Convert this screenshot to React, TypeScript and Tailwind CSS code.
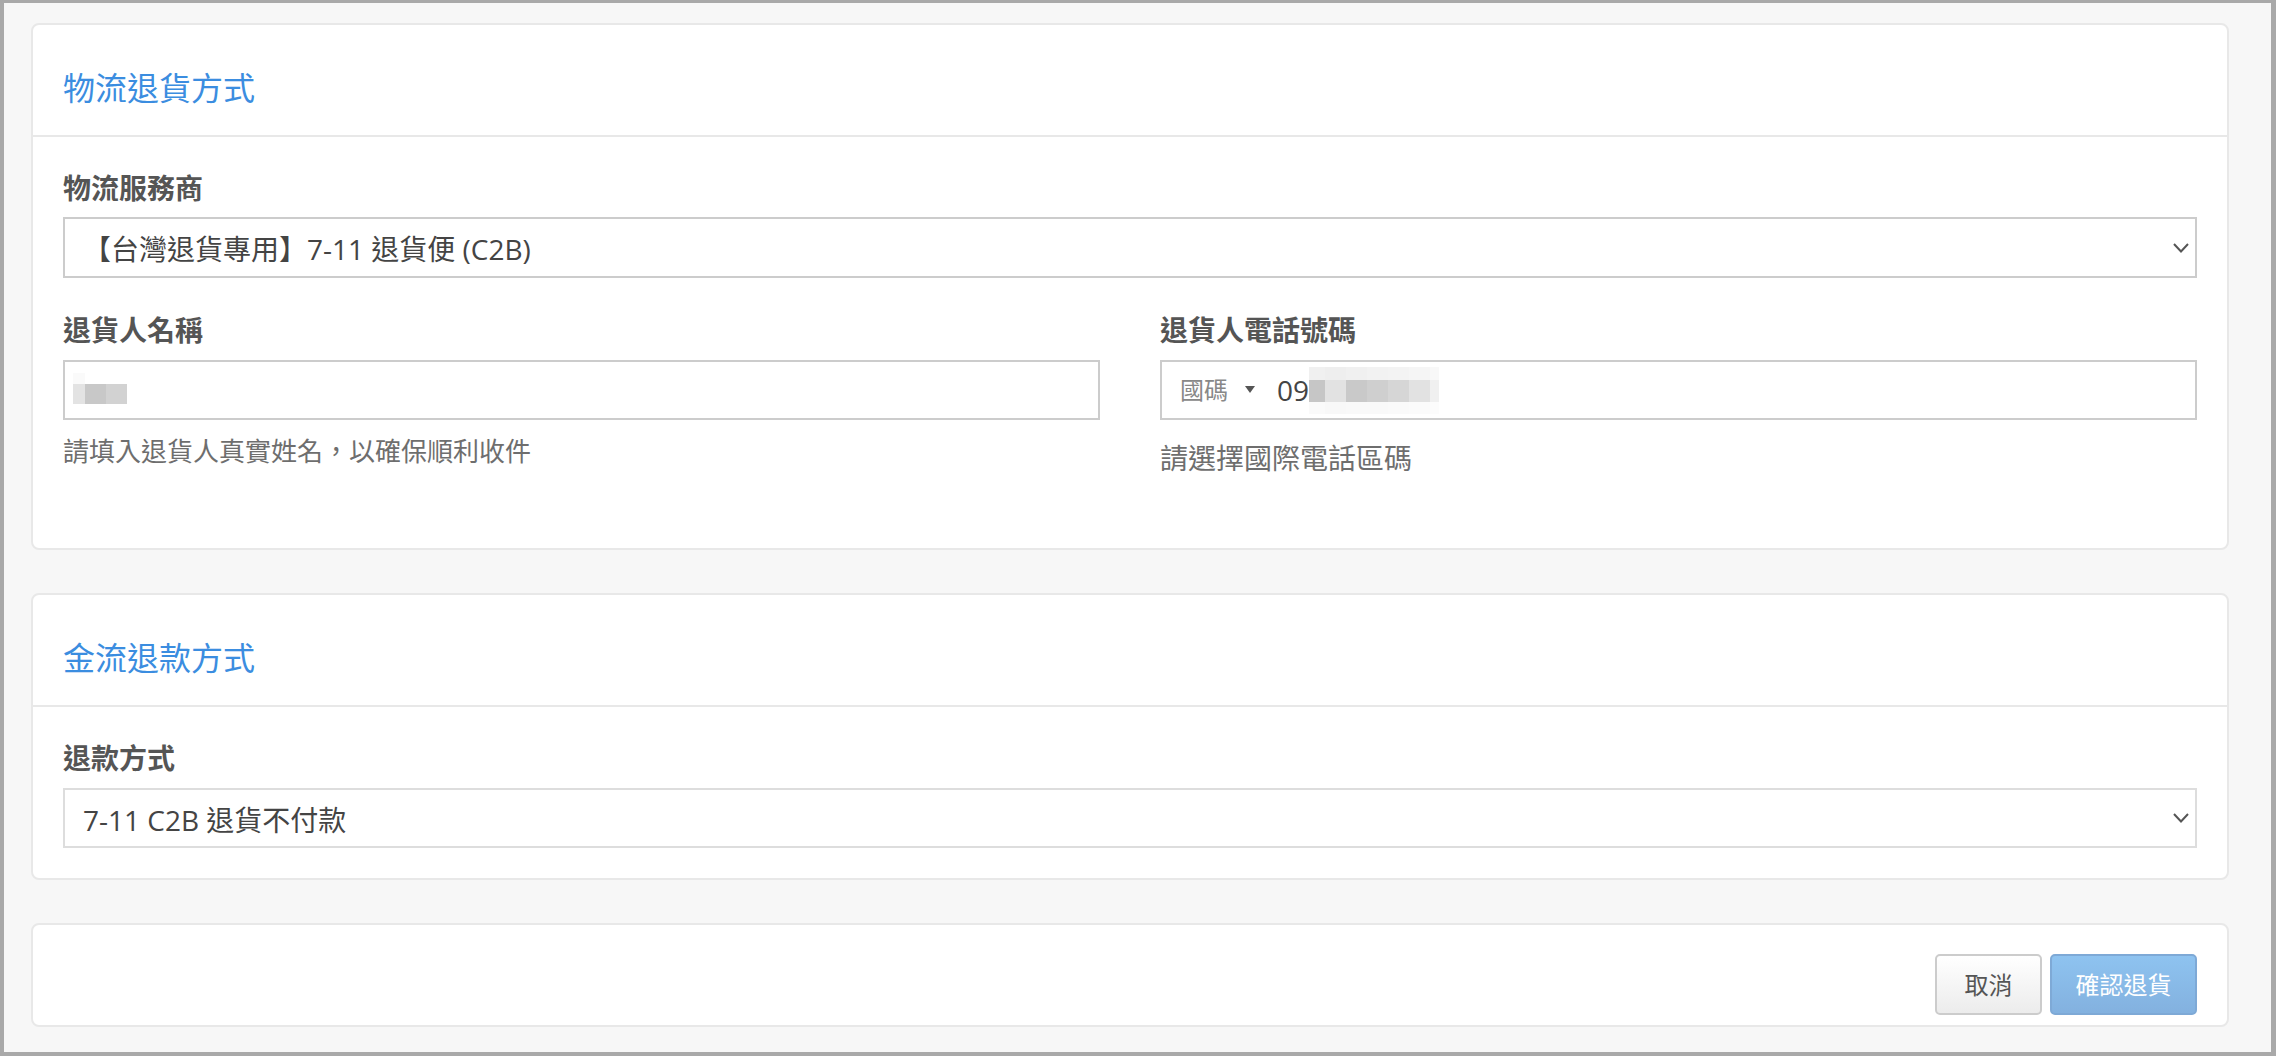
const font = "font-['Open_Sans','Noto_Sans_CJK_TC',sans-serif]";

// pixelated mask over personal data, colour of each block
const nameBlur = [
  ["#fafafa", "#ffffff", "#ffffff"],
  ["#e3e3e3", "#c8c8c8", "#d2d2d2"],
];
const nameBlurW = [12, 21, 21];

const phoneBlur = [
  ["#f0f0f0", "#eeeeee", "#f0f0f0", "#f2f2f2", "#f3f3f3", "#f5f5f5", "#f8f8f8"],
  ["#c6c6c6", "#e2e2e2", "#c9c9c9", "#cfcfcf", "#d6d6d6", "#e2e2e2", "#f0f0f0"],
  ["#fafafa", "#f8f8f8", "#f9f9f9", "#f9f9f9", "#fafafa", "#fbfbfb", "#fcfcfc"],
];
const phoneBlurW = [16, 21, 21, 21, 21, 21, 9];
const phoneBlurH = [13, 22, 12];

function Chevron() {
  return (
    <svg width="16" height="10" viewBox="0 0 16 10" className="shrink-0">
      <polyline points="1,1 8,8.5 15,1" fill="none" stroke="#555" strokeWidth="2" />
    </svg>
  );
}

function Select({ value, h, border }: { value: string; h: string; border: string }) {
  return (
    <div className={`flex items-center justify-between border-2 bg-white pl-[18px] pr-[6px] ${h} ${border}`}>
      <span className="text-[28px] leading-none text-[#444] mt-[3px]">{value}</span>
      <Chevron />
    </div>
  );
}

function Card({ title, children }: { title?: string; children: React.ReactNode }) {
  return (
    <div className="rounded-lg border-2 border-[#e8e8e8] bg-white">
      {title && (
        <div className="h-[112px] border-b-2 border-[#e8e8e8] px-[30px] pt-[41px]">
          <h2 className="text-[32px] leading-[44px] font-normal text-[#3b8de0]">{title}</h2>
        </div>
      )}
      {children}
    </div>
  );
}

export default function App() {
  return (
    <div
      className={`${font} h-[1056px] w-full border-t-[3px] border-l-4 border-r-[5px] border-b-4 border-[#a9a9a9] bg-[#f7f7f7] pl-[27px] pr-[42px] pt-[20px] pb-[28px] flex flex-col gap-[43px]`}
    >
      {/* 物流退貨方式 */}
      <Card title="物流退貨方式">
        <div className="px-[30px] pt-[31px] pb-[70px]">
          <div className="text-[28px] leading-[40px] font-bold text-[#555] mb-[9px]">物流服務商</div>
          <Select value="【台灣退貨專用】7-11 退貨便 (C2B)" h="h-[61px]" border="border-[#cccccc]" />

          <div className="grid grid-cols-2 gap-x-[60px] mt-[32px] items-start">
            <div>
              <div className="text-[28px] leading-[40px] font-bold text-[#555] mb-[10px]">退貨人名稱</div>
              <div className="flex h-[60px] items-center border-2 border-[#cccccc] bg-white pl-[8px]">
                <div className="flex flex-col mt-[-3px]">
                  {nameBlur.map((row, r) => (
                    <div key={r} className="flex">
                      {row.map((c, i) => (
                        <div
                          key={i}
                          style={{ background: c, width: nameBlurW[i], height: r === 0 ? 11 : 20 }}
                        />
                      ))}
                    </div>
                  ))}
                </div>
              </div>
              <div className="mt-[13px] text-[26px] leading-[36px] text-[#6e6e6e]">
                請填入退貨人真實姓名，以確保順利收件
              </div>
            </div>

            <div>
              <div className="text-[28px] leading-[40px] font-bold text-[#555] mb-[10px]">退貨人電話號碼</div>
              <div className="flex h-[60px] items-center border-2 border-[#cccccc] bg-white pl-[18px]">
                <span className="text-[24px] leading-none text-[#888]">國碼</span>
                <svg width="10" height="7" viewBox="0 0 10 7" className="ml-[17px] mt-[-2px]">
                  <polygon points="0,0 10,0 5,7" fill="#555" />
                </svg>
                <span className="ml-[22px] text-[28px] leading-none text-[#444]">09</span>
                <div className="flex flex-col">
                  {phoneBlur.map((row, r) => (
                    <div key={r} className="flex">
                      {row.map((c, i) => (
                        <div
                          key={i}
                          style={{ background: c, width: phoneBlurW[i], height: phoneBlurH[r] }}
                        />
                      ))}
                    </div>
                  ))}
                </div>
              </div>
              <div className="mt-[18px] text-[28px] leading-[40px] text-[#6e6e6e]">請選擇國際電話區碼</div>
            </div>
          </div>
        </div>
      </Card>

      {/* 金流退款方式 */}
      <Card title="金流退款方式">
        <div className="px-[30px] pt-[31px] pb-[30px]">
          <div className="text-[28px] leading-[40px] font-bold text-[#555] mb-[10px]">退款方式</div>
          <Select value="7-11 C2B 退貨不付款" h="h-[60px]" border="border-[#dddddd]" />
        </div>
      </Card>

      {/* actions */}
      <Card>
        <div className="flex justify-end gap-[8px] px-[30px] pt-[29px] pb-[10px]">
          <button className="flex h-[61px] w-[107px] items-center justify-center rounded-[5px] border-2 border-[#cccccc] bg-gradient-to-b from-white to-[#ececec] text-[24px] text-[#555]">
            取消
          </button>
          <button className="flex h-[61px] w-[147px] items-center justify-center rounded-[5px] border-2 border-[#7ea9d6] bg-gradient-to-b from-[#8ec3f0] to-[#83b1df] text-[24px] text-white">
            確認退貨
          </button>
        </div>
      </Card>
    </div>
  );
}
